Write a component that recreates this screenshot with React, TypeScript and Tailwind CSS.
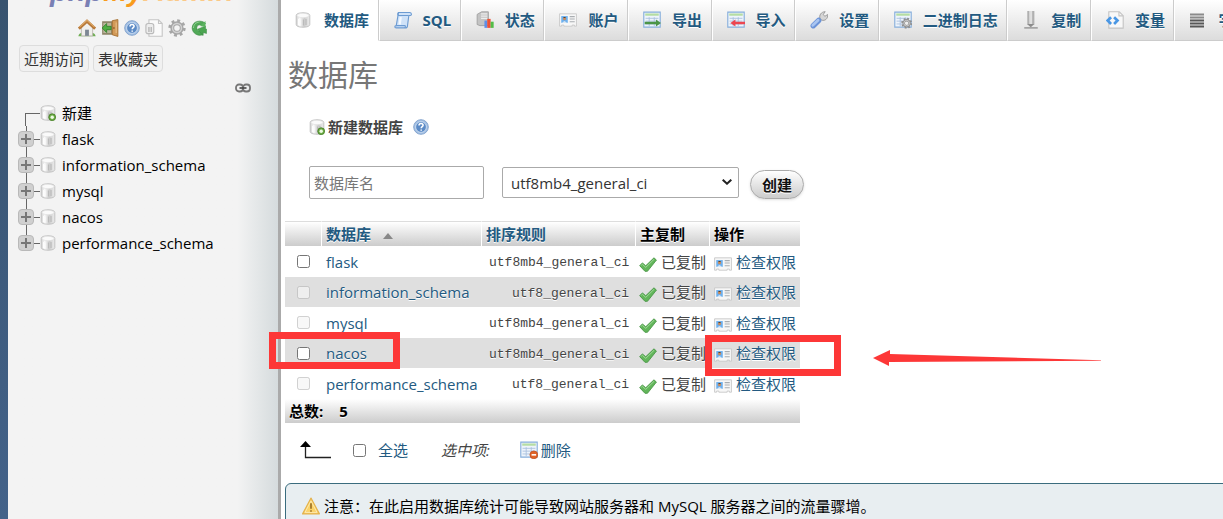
import { useId, useState } from "react";
import type { ReactNode } from "react";

type IconProps = { className?: string };

function Svg({ className = "size-4", children }: IconProps & { children: ReactNode }) {
  return (
    <svg
      viewBox="0 0 16 16"
      className={`shrink-0 ${className}`}
      fill="none"
      aria-hidden="true"
    >
      {children}
    </svg>
  );
}

function DbShape() {
  const id = useId();
  return (
    <>
      <defs>
        <linearGradient id={id} x1="0" x2="1">
          <stop offset="0" stopColor="#cfcfcf" />
          <stop offset=".25" stopColor="#fafafa" />
          <stop offset=".6" stopColor="#cdcdcd" />
          <stop offset="1" stopColor="#ededed" />
        </linearGradient>
      </defs>
      <path
        d="M1.200 3.500C1.200 1.800 4 .8 8 .8s6.800 1 6.800 2.700v9c0 1.700-2.800 2.700-6.800 2.700s-6.800-1-6.800-2.700z"
        fill={`url(#${id})`}
        stroke="#c2c2c2"
      />
      <ellipse cx="8" cy="3.500" rx="6" ry="2.200" fill="#fafafa" stroke="#dcdcdc" strokeWidth=".6" />
      <path d="M3.500 7v6M5 7.500v6" stroke="#fff" strokeWidth=".9" />
      <path d="M8.500 7.500v6M11 7v6" stroke="#bababa" strokeWidth="1.200" />
    </>
  );
}

function DbIcon() {
  return (
    <Svg>
      <DbShape />
    </Svg>
  );
}

function DbNewIcon() {
  return (
    <Svg>
      <DbShape />
      <circle cx="12.200" cy="12.200" r="3.400" fill="#6fae48" stroke="#3d7a1c" strokeWidth=".8" />
      <circle cx="12.200" cy="12.200" r="1.700" fill="#eefae4" />
    </Svg>
  );
}

function HelpIcon() {
  return (
    <Svg>
      <circle cx="8" cy="8" r="7.300" fill="#a3c0e4" stroke="#86a6cf" />
      <circle cx="8" cy="8" r="5.400" fill="#5c8bc6" stroke="#cfdff2" strokeWidth=".9" />
      <path
        d="M6 6.600C6 5.200 6.900 4.500 8 4.500s2.100.7 2.100 1.800c0 1.300-1.900 1.500-1.900 3M8.200 10.500v1.300"
        stroke="#fff"
        strokeWidth="1.500"
      />
    </Svg>
  );
}

function HomeIcon() {
  return (
    <Svg className="size-[18px]">
      <path d="M.3 15.300c.8-3 3.200-3.500 4.200-1.800h7c1-1.700 3.400-1.200 4.200 1.800z" fill="#6fae54" />
      <path d="M3 7.500 8 3l5 4.500V15H3z" fill="#f0efec" stroke="#b5b0a8" strokeWidth=".7" />
      <path d="M6.300 9.500h3.400V15H6.300z" fill="#7d8794" />
      <path d="m.8 8.600 7.200-6.600 7.200 6.600" stroke="#b87837" strokeWidth="2.600" />
      <path d="m1.300 7.200 6.700-6.100 6.700 6.100" stroke="#dba767" />
    </Svg>
  );
}

function ExitIcon() {
  return (
    <Svg className="size-[18px]">
      <path d="M1 2h10v12H1z" fill="#8d8468" />
      <path d="M2 3.500h7v9H2z" fill="#b9b59c" />
      <path d="M10 1.500 15 .5v15l-5-1.500z" fill="#d29a58" stroke="#a56f31" strokeWidth=".8" />
      <path d="M13.500 3v9.500" stroke="#e9be83" />
      <circle cx="11.500" cy="8" r=".7" fill="#704515" />
      <path d="m1 8 4-4v2.500h4v3H5V12z" fill="#4fad43" stroke="#2d7e27" strokeWidth=".7" />
    </Svg>
  );
}

function DocsIcon() {
  return (
    <Svg className="size-[18px]">
      <path d="M3.500.7H12L15.300 4v11.300H3.500z" fill="#fafafa" stroke="#c5c5c5" />
      <path d="M12 .7V4h3.300" stroke="#c5c5c5" />
      <rect x=".8" y="4" width="7" height="9" rx="2" fill="#ededed" stroke="#bbb" />
      <path d="M3.500 7v4.500M5.500 7v4.500" stroke="#aaa" />
    </Svg>
  );
}

function GearShape({ color }: { color: string }) {
  return (
    <>
      <circle cx="8" cy="8" r="6.500" stroke={color} strokeWidth="2.400" strokeDasharray="2.550 2.550" />
      <circle cx="8" cy="8" r="4.200" stroke={color} strokeWidth="3.400" />
      <circle cx="8" cy="8" r="4" stroke="#d2d2d2" strokeWidth="1.300" />
    </>
  );
}

function GearIcon() {
  return (
    <Svg className="size-[18px]">
      <GearShape color="#a6a6a6" />
    </Svg>
  );
}

function ReloadIcon() {
  return (
    <Svg>
      <path
        d="M14.500 3.500C10.500-.5 1.500.5 1.200 7.800c0 4 3 7 7.300 7.500l3.500-.5v-3.300c-3 .7-6.300-.5-6.300-3.700 0-3 3.500-3.800 5.300-2z"
        fill="#51a957"
        stroke="#3a8a42"
        strokeWidth=".7"
      />
      <path d="M6.500 9.200 14.500 6v3h1v4.500L12 12.500v3z" fill="#4ba551" stroke="#3a8a42" strokeWidth=".5" />
      <path d="M14.500 1v6L9 6z" fill="#5bb35f" />
      <path d="M2.500 8C2.500 4.500 5 2.300 8.500 2" stroke="#9bd79b" strokeWidth=".9" />
    </Svg>
  );
}

function SqlIcon() {
  return (
    <Svg className="size-[18px]">
      <path d="M4 1.300h10c1.700 0 2 2.700.5 2.700h-1.300L12 13c0 1.500-1 2-2 2H2c-1.700 0-1.700-2 0-2z" fill="#cfe2f8" stroke="#6c9bd2" />
      <path d="M4 1.300c-1 .8-.8 2.200 0 2.700h9M2 13h7.500c.8 0 .8 1.500 0 2" stroke="#6c9bd2" />
      <path d="M6 5.500 5 12" stroke="#f4f9ff" strokeWidth="2" />
    </Svg>
  );
}

function StatusIcon() {
  return (
    <Svg className="size-[18px]">
      <path d="M1 3 5 .7h6V13H3.500L1 12z" fill="#c3c3c3" stroke="#999" strokeWidth=".7" />
      <path d="M4.500 2.500H10M4.500 4.500H10M4.500 6.500H10" stroke="#ececec" />
      <path d="M7.500 8.500h2.500v6.500H7.500z" fill="#5f8fe8" />
      <path d="M10 7h3v8h-3z" fill="#ee5136" />
      <path d="M13 9.500h2.700V15H13z" fill="#52bd48" />
    </Svg>
  );
}

function RightsIcon() {
  return (
    <Svg className="size-[18px]">
      <path d="M.5 2.500h15v11h-1.800v-1h-2v1H4.300v-1h-2v1H.5z" fill="#f7f7f7" stroke="#c8c8c8" strokeWidth=".8" />
      <path d="M2 4.500h5.800v6H2z" fill="#6db0ee" />
      <circle cx="4.900" cy="6.900" r="1.400" fill="#c98b5b" />
      <path d="M3.500 6.200q1.400-1.800 2.800 0z" fill="#5b3a21" />
      <path d="M2.800 10.500q2-3 4.200 0z" fill="#f4f4f4" />
      <path d="M9.500 5h4.500M9.500 7.200h4.500M9.500 9.500h4.500" stroke="#a9adb1" strokeWidth=".9" />
    </Svg>
  );
}

function SheetShape() {
  return (
    <>
      <path d="M.7 1h14.600v13.300H.7z" fill="#eef4fb" stroke="#86aedb" />
      <path d="M2 2.200h12v2H2z" fill="#b5dda3" />
      <path d="M2.300 6.500h11.400M2.300 9h11.400M2.300 11.500h11.400M5.500 5.500v8M10 5.500v8" stroke="#a9c1df" strokeWidth=".8" />
    </>
  );
}

function ExportIcon() {
  return (
    <Svg className="size-[18px]">
      <SheetShape />
      <path d="M1.500 9.500h10V7.500L16 10.600 11.500 13.700v-2h-10z" fill="#4b9446" />
    </Svg>
  );
}

function ImportIcon() {
  return (
    <Svg className="size-[18px]">
      <SheetShape />
      <path d="M16 9.500H7.500V7.500L3 10.600l4.500 3.100v-2H16z" fill="#ec4650" />
    </Svg>
  );
}

function WrenchIcon() {
  return (
    <Svg className="size-[18px]">
      <path d="m7.500 8.500 3-3" stroke="#b5b5b5" strokeWidth="2.800" />
      <path
        d="M9 7C7.800 3.500 10 .8 13.500.6L11.700 3.200l1.600 1.500 2.400-1.600c.5 3.600-2.400 6-5.200 5z"
        fill="#d6d6d6"
        stroke="#969696"
        strokeWidth=".8"
      />
      <path d="m2.900 13.100 4.800-4.700" stroke="#6b93d8" strokeWidth="4.800" strokeLinecap="round" />
      <path d="m2.500 12.700 4.700-4.500" stroke="#a9c5f1" strokeWidth="2.400" strokeLinecap="round" />
    </Svg>
  );
}

function BinlogIcon() {
  return (
    <Svg className="size-[18px]">
      <SheetShape />
      <g transform="translate(6.200 5.800) scale(.63)">
        <circle cx="8" cy="8" r="5" fill="#eee" />
        <GearShape color="#8e8e8e" />
      </g>
    </Svg>
  );
}

function ReplicationIcon() {
  return (
    <Svg className="size-[18px]">
      <path d="M5.700 0v12M10 0v12" stroke="#b0b0b0" strokeWidth="2" />
      <path d="M7.800 0v12" stroke="#dedede" strokeWidth="2" />
      <path d="m4.500 11.500 3.300 3L11 11.500z" fill="#8b8b8b" />
      <path d="M2 15h12" stroke="#a2a2a2" strokeWidth="1.500" />
    </Svg>
  );
}

function VariablesIcon() {
  return (
    <Svg className="size-[18px]">
      <path d="M2.500.7h9.300l3.500 3.500v11H2.500z" fill="#f8f8f8" stroke="#c4c4c4" />
      <path d="M11.500.8v3.500h3.700" stroke="#c4c4c4" />
      <path d="m4.500 5.500-3 3 3 3M7.200 5.500l3 3-3 3" stroke="#4a97e4" strokeWidth="2.400" />
    </Svg>
  );
}

function CharsetIcon() {
  return (
    <Svg>
      <path d="M1 2.500h14M1 5.500h14" stroke="#8a8a8a" strokeWidth="2" />
      <path d="M1 8.500h14M1 11.500h14M1 14.500h14" stroke="#575757" strokeWidth="2" />
    </Svg>
  );
}

function TickIcon() {
  return (
    <Svg className="size-[18px]">
      <path
        d="M.6 9.500 3 7l3 2.500L13.300 2.500l2.200 2L7.500 14.500H5.300z"
        fill="#62b55a"
        stroke="#3f8f3c"
        strokeWidth=".7"
      />
      <path d="m2 9.200 1-.9 3 2.700 7.500-7.300" stroke="#a6dc9e" strokeWidth=".8" />
    </Svg>
  );
}

function DropIcon() {
  return (
    <Svg className="size-[18px]">
      <SheetShape />
      <circle cx="12.300" cy="12.300" r="3.500" fill="#e06328" stroke="#b9481a" strokeWidth=".6" />
      <path d="M10.300 12.300h4" stroke="#fff" strokeWidth="1.400" />
    </Svg>
  );
}

function WarningIcon() {
  return (
    <Svg className="size-[18px]">
      <path d="M8 .9 15.500 15H.5z" fill="#fbd368" stroke="#e3b14c" strokeLinejoin="round" />
      <path d="M8 3.500 13.300 13.700H2.700z" stroke="#fdeab4" strokeWidth=".8" />
      <path d="M8 5.500v5M8 11.700v1.500" stroke="#a3782a" strokeWidth="1.600" />
    </Svg>
  );
}

function LinkIcon() {
  return (
    <svg viewBox="0 0 16 10" className="h-[10px] w-4" fill="none" aria-hidden="true">
      <rect x="1" y="1.500" width="7" height="7" rx="3" stroke="#777" strokeWidth="1.800" />
      <rect x="8" y="1.500" width="7" height="7" rx="3" stroke="#777" strokeWidth="1.800" />
      <path d="M4.500 5h7" stroke="#444" strokeWidth="1.600" />
    </svg>
  );
}

const shortcuts = [
  { label: "主页", icon: <HomeIcon /> },
  { label: "退出", icon: <ExitIcon /> },
  { label: "phpMyAdmin 文档", icon: <HelpIcon /> },
  { label: "文档", icon: <DocsIcon /> },
  { label: "导航面板设置", icon: <GearIcon /> },
  { label: "刷新导航面板", icon: <ReloadIcon /> },
];

const tabs = [
  { label: "数据库", icon: <DbIcon /> },
  { label: "SQL", icon: <SqlIcon /> },
  { label: "状态", icon: <StatusIcon /> },
  { label: "账户", icon: <RightsIcon /> },
  { label: "导出", icon: <ExportIcon /> },
  { label: "导入", icon: <ImportIcon /> },
  { label: "设置", icon: <WrenchIcon /> },
  { label: "二进制日志", icon: <BinlogIcon /> },
  { label: "复制", icon: <ReplicationIcon /> },
  { label: "变量", icon: <VariablesIcon /> },
  { label: "字符集", icon: <CharsetIcon /> },
];

const databases = [
  { name: "flask", collation: "utf8mb4_general_ci", system: false },
  { name: "information_schema", collation: "utf8_general_ci", system: true },
  { name: "mysql", collation: "utf8mb4_general_ci", system: true },
  { name: "nacos", collation: "utf8mb4_general_ci", system: false },
  { name: "performance_schema", collation: "utf8_general_ci", system: true },
];

function Sidebar() {
  return (
    <aside className="w-[270px] shrink-0 overflow-hidden bg-linear-to-r from-[#f3f3f3] from-85% to-[#d5dbdd]">
      <div className="-mt-[25px] h-[35px] pl-[42px] font-['Liberation_Sans',sans-serif] text-[29px] leading-8 font-bold whitespace-nowrap italic">
        <span className="text-[#7a80b4]">php</span>
        <span className="text-[#f89c1c]">My</span>
        <span className="text-[#fbc988]">Admin</span>
      </div>
      <div className="mt-[9px] flex h-[18px] items-center gap-[5px] pl-[70px]">
        {shortcuts.map(({ label, icon }) => (
          <a key={label} href="#" aria-label={label}>
            {icon}
          </a>
        ))}
      </div>
      <div className="mt-2 flex gap-1 pl-[11px]">
        {["近期访问", "表收藏夹"].map((label) => (
          <button
            key={label}
            className="h-[27px] rounded border border-[#ddd] bg-[#f1f1f1] px-1 leading-6 text-[#333]"
          >
            {label}
          </button>
        ))}
      </div>
      <div className="mt-[11px] flex justify-end pr-[27px]">
        <LinkIcon />
      </div>
      <ul className="mt-[7px] pl-[10px] text-black">
        <li className="flex h-[26px] items-center">
          <span className="ml-[7px] h-[13px] w-[15px] self-end border-t border-l border-[#666]" />
          <DbNewIcon />
          <a href="#" className="pl-[6px]">
            新建
          </a>
        </li>
        {databases.map(({ name }) => (
          <li key={name} className="flex h-[26px] items-center">
            <span className="flex w-4 flex-col items-center self-stretch">
              <span className="w-px flex-1 bg-[#666]" />
              <button
                aria-label={`展开 ${name}`}
                className="grid size-4 place-items-center rounded border border-[#b9b9b9] bg-[#d0d0d0]"
              >
                <svg viewBox="0 0 10 10" className="size-[10px]" aria-hidden="true">
                  <path d="M5 0v10M0 5h10" stroke="#777" strokeWidth="2" />
                </svg>
              </button>
              <span className={`w-px flex-1 ${name === "performance_schema" ? "" : "bg-[#666]"}`} />
            </span>
            <span className="h-px w-[6px] bg-[#666]" />
            <DbIcon />
            <a href="#" className="pl-[6px]">
              {name}
            </a>
          </li>
        ))}
      </ul>
    </aside>
  );
}

function TopMenu() {
  return (
    <nav className="h-[41px] overflow-hidden">
      <div className="flex h-full w-[992px] whitespace-nowrap">
        {tabs.map(({ label, icon }, index) => (
          <a
            key={label}
            href="#"
            className={`flex shrink-0 grow items-center border-r border-b border-r-[#ccc] pr-2 pb-px pl-[14px] font-bold text-[#235a81] [text-shadow:0_1px_0_#fff] ${
              index === 0
                ? "border-b-white bg-white"
                : "border-l border-b-[#ccc] border-l-white bg-linear-to-b from-white to-[#dcdcdc]"
            }`}
          >
            <span className="flex w-[29px]">{icon}</span>
            {label}
          </a>
        ))}
      </div>
    </nav>
  );
}

function CreateDatabase() {
  return (
    <form className="pl-7" onSubmit={(e) => e.preventDefault()}>
      <div className="flex h-6 items-center font-bold text-[#444]">
        <DbNewIcon />
        <label htmlFor="new-db" className="ml-[3px]">
          新建数据库
        </label>
        <a href="#" aria-label="文档" className="ml-[10px]">
          <HelpIcon />
        </a>
      </div>
      <div className="mt-[27px] flex items-center">
        <input
          id="new-db"
          type="text"
          placeholder="数据库名"
          className="h-[33px] w-[175px] rounded-xs border border-[#aaa] bg-white px-1 placeholder:text-[#777]"
        />
        <div className="relative ml-[18px] w-[237px]">
          <select
            aria-label="排序规则"
            className="block h-[31px] w-full appearance-none rounded-xs border border-[#aaa] bg-white px-2 text-[#333]"
          >
            <option>utf8mb4_general_ci</option>
            <option>utf8_general_ci</option>
          </select>
          <svg
            viewBox="0 0 10 6"
            className="pointer-events-none absolute top-3 right-[7px] h-[6px] w-[10px]"
            fill="none"
            aria-hidden="true"
          >
            <path d="m.7.700 4.300 4 4.300-4" stroke="#222" strokeWidth="2" />
          </svg>
        </div>
        <button
          type="submit"
          className="mt-1 ml-[11px] h-[29px] rounded-full border border-[#aaa] bg-linear-to-b from-white to-[#ccc] px-[11px] leading-6 font-bold text-[#111] shadow-sm [text-shadow:0_1px_0_#fff]"
        >
          创建
        </button>
      </div>
    </form>
  );
}

type TableProps = {
  checked: string[];
  onToggle: (name: string) => void;
};

const headCell =
  "border-t border-r border-t-[#ddd] border-r-white bg-linear-to-b from-white to-[#ccc] px-1 text-left font-bold last:border-r-0";

function DatabaseTable({ checked, onToggle }: TableProps) {
  return (
    <table className="w-[515px] table-fixed border-separate border-spacing-0 whitespace-nowrap text-[#444] [text-shadow:0_1px_0_#fff]">
      <colgroup>
        <col className="w-[37px]" />
        <col className="w-[160px]" />
        <col className="w-[154px]" />
        <col className="w-[74px]" />
        <col className="w-[90px]" />
      </colgroup>
      <thead>
        <tr className="h-[25px] text-black">
          <th className={headCell} aria-label="选择" />
          <th className={headCell}>
            <a href="#" className="flex items-center text-[#235a81]">
              数据库
              <svg viewBox="0 0 10 6" className="mt-1 ml-3 h-[6px] w-[10px]" aria-hidden="true">
                <path d="M5 0 10 6H0z" fill="#888" />
              </svg>
            </a>
          </th>
          <th className={headCell}>
            <a href="#" className="text-[#235a81]">
              排序规则
            </a>
          </th>
          <th className={headCell}>主复制</th>
          <th className={headCell}>操作</th>
        </tr>
      </thead>
      <tbody>
        {databases.map(({ name, collation, system }) => (
          <tr key={name} className="h-[31px] even:h-[30px] even:bg-[#dfdfdf]">
            <td className="p-0">
              <input
                type="checkbox"
                aria-label={name}
                disabled={system}
                checked={checked.includes(name)}
                onChange={() => onToggle(name)}
                className="ml-3 block size-[13px]"
              />
            </td>
            <td className="px-1 py-0">
              <a href="#" className="text-[#235a81]">
                {name}
              </a>
            </td>
            <td className="px-[7px] pt-[3px] pb-0 text-right font-['Liberation_Mono',monospace] text-[13px]">
              {collation}
            </td>
            <td className="p-0 pl-[3px]">
              <span className="flex items-center gap-1">
                <span className="mt-1">
                  <TickIcon />
                </span>
                已复制
              </span>
            </td>
            <td className="p-0 pl-1">
              <a href="#" className="flex items-center gap-1 text-[#235a81]">
                <span className="mt-1">
                  <RightsIcon />
                </span>
                检查权限
              </a>
            </td>
          </tr>
        ))}
      </tbody>
      <tfoot>
        <tr className="h-6 text-black">
          <th colSpan={5} className="bg-linear-to-b from-white to-[#ccc] px-1 text-left font-bold">
            总数: <span className="ml-3">{databases.length}</span>
          </th>
        </tr>
      </tfoot>
    </table>
  );
}

// Hand-drawn style marks that sit over the page
function Annotations() {
  return (
    <div className="pointer-events-none" aria-hidden="true">
      <div className="absolute top-[332px] left-[269px] h-[37px] w-[131px] border-[7px] border-[#fd3737]" />
      <div className="absolute top-[335px] left-[705px] h-[41px] w-[136px] border-[7px] border-[#fd3737]" />
      <svg viewBox="0 0 228 16" className="absolute top-[350px] left-[873px] h-4 w-[228px]">
        <path d="M0 8 17 0V4L228 10.300V10.700L16 12V16z" fill="#fd3737" />
      </svg>
    </div>
  );
}

function App() {
  const [checked, setChecked] = useState<string[]>([]);

  const selectable = databases.filter((db) => !db.system).map((db) => db.name);
  const allChecked = checked.length === selectable.length;

  function toggle(name: string) {
    setChecked((prev) =>
      prev.includes(name) ? prev.filter((n) => n !== name) : [...prev, name],
    );
  }

  return (
    <div className="relative flex h-screen overflow-hidden bg-white font-['Open_Sans','Noto_Sans_CJK_SC',sans-serif] text-[15px] leading-6">
      <div className="w-2 shrink-0 bg-linear-to-b from-[#38536f] to-[#436289]" />
      <Sidebar />
      <main className="min-w-0 flex-1 border-l-3 border-[#aaa]">
        <TopMenu />
        <h2 className="mt-[14px] pl-[7px] text-[30px] leading-10 text-[#777]">数据库</h2>
        <div className="mt-5">
          <CreateDatabase />
        </div>
        <div className="mt-[22px] pl-1">
          <DatabaseTable checked={checked} onToggle={toggle} />
          <div className="mt-[15px] flex h-6 items-center text-[#235a81]">
            <svg viewBox="0 0 32 18" className="ml-[15px] h-[18px] w-8" fill="none" aria-hidden="true">
              <path d="M5.500 4v12.500H31" stroke="#222" strokeWidth="1.300" />
              <path d="m0 6 5.500-6L11 6z" fill="#000" />
            </svg>
            <label className="ml-[21px] flex items-center gap-3">
              <input
                type="checkbox"
                checked={allChecked}
                onChange={() => setChecked(allChecked ? [] : selectable)}
                className="size-[13px]"
              />
              全选
            </label>
            <em className="ml-[33px] text-[#444]">选中项:</em>
            <button className="ml-[30px] flex items-center gap-[3px]">
              <DropIcon />
              删除
            </button>
          </div>
        </div>
        <div className="-mr-2 mt-[21px] ml-1 flex h-14 rounded-md border border-[#3a6c7e] bg-[#e8eef1] pt-[10px] pl-4 text-black">
          <span className="flex h-6 items-center gap-1">
            <WarningIcon />
            注意：在此启用数据库统计可能导致网站服务器和 MySQL 服务器之间的流量骤增。
          </span>
        </div>
      </main>
      <Annotations />
    </div>
  );
}

export default App;
